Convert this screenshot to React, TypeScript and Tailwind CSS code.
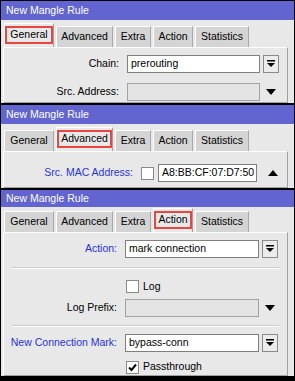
import type { ReactNode } from 'react';

const tabs = [
  { name: 'General', w: 'w-[50px]' },
  { name: 'Advanced', w: 'w-[57px]' },
  { name: 'Extra', w: 'w-[36px]' },
  { name: 'Action', w: 'w-[40px]' },
  { name: 'Statistics', w: 'w-[54px]' },
];

function TitleBar() {
  return (
    <div className="h-[19px] bg-[#6265d0] text-white text-[10.5px] pl-[5px] flex items-center leading-none">
      New Mangle Rule
    </div>
  );
}

function Tabs({ active }: { active: string }) {
  return (
    <div className="h-[27px] flex items-end gap-[2px] pl-[3px]">
      {tabs.map((t) =>
        t.name === active ? (
          <div key={t.name} className={`${t.w} h-[24px] bg-[#e8e8e8] border-t border-l border-white border-r border-r-[#a0a0a0] flex flex-col pt-[2px]`}>
            <div className="h-[18px] border-2 border-[#e8473f] flex items-center justify-center">{t.name}</div>
          </div>
        ) : (
          <div key={t.name} className={`${t.w} h-[21px] bg-[#d4d4d4] border-t border-l border-white border-r border-r-[#a8a8a8] flex items-center justify-center`}>
            {t.name}
          </div>
        )
      )}
    </div>
  );
}

function DropButton() {
  return (
    <div className="w-[16px] h-[18px] border border-[#8a8a8a] bg-[#ececec] flex items-center justify-center">
      <svg width="8" height="8" viewBox="0 0 8 8">
        <rect x="0" y="0" width="8" height="1.5" fill="#000" />
        <path d="M0 3 L8 3 L4 7 Z" fill="#000" />
      </svg>
    </div>
  );
}

function Arrow({ up }: { up?: boolean }) {
  return (
    <div className="w-[16px] h-[18px] flex items-center justify-center">
      <svg width="10" height="6" viewBox="0 0 10 6">
        <path d={up ? 'M0 6 L10 6 L5 0 Z' : 'M0 0 L10 0 L5 6 Z'} fill="#000" />
      </svg>
    </div>
  );
}

function Input({ value, disabled, w = 'w-[133px]' }: { value?: string; disabled?: boolean; w?: string }) {
  return (
    <div className={`${w} h-[18px] border ${disabled ? 'bg-[#e4e4e4] border-[#a2a2a2]' : 'bg-white border-[#7f7f7f]'} pl-[3px] flex items-center`}>
      {value}
    </div>
  );
}

function Check({ checked }: { checked?: boolean }) {
  return (
    <div className="w-[13px] h-[13px] border border-[#8a8a8a] bg-white flex items-center justify-center">
      {checked && (
        <svg width="9" height="9" viewBox="0 0 9 9">
          <path d="M1 4.5 L3.5 7 L8 1.5" stroke="#000" strokeWidth="2" fill="none" />
        </svg>
      )}
    </div>
  );
}

function Row({ label, blue, lw, children }: { label: string; blue?: boolean; lw: string; children: ReactNode }) {
  return (
    <div className="flex items-center gap-[8px]">
      <div className={`${lw} text-right whitespace-nowrap ${blue ? 'text-[#1f33e6]' : 'text-black'}`}>{label}</div>
      {children}
    </div>
  );
}

function Sep() {
  return <div className="mx-[8px] h-[2px] border-t border-[#cdcdcd] border-b border-b-white" />;
}

function Panel({ active, h, children }: { active: string; h: string; children: ReactNode }) {
  return (
    <div className={`${h} bg-[#e8e8e8] overflow-hidden flex flex-col`}>
      <TitleBar />
      <Tabs active={active} />
      <div className="ml-[2px] w-[285px] flex-1 border-t border-l border-white border-r border-r-[#a0a0a0] border-b border-b-[#a0a0a0]">
        {children}
      </div>
    </div>
  );
}

export default function App() {
  return (
    <div className="w-[295px] h-[381px] bg-black p-[1px] pb-[2px] flex flex-col gap-[2px] text-[10.5px] text-black font-['Liberation_Sans',Arial,sans-serif]">
      <Panel active="General" h="h-[102px]">
        <div className="pt-[7px] flex flex-col gap-[10px]">
          <Row label="Chain:" lw="w-[115px]">
            <div className="flex items-center gap-[3px]">
              <Input value="prerouting" w="w-[133px]" />
              <DropButton />
            </div>
          </Row>
          <Row label="Src. Address:" lw="w-[115px]">
            <div className="flex items-center gap-[3px]">
              <Input disabled w="w-[133px]" />
              <Arrow />
            </div>
          </Row>
        </div>
      </Panel>
      <Panel active="Advanced" h="h-[83px]">
        <div className="pt-[12px]">
          <Row label="Src. MAC Address:" blue lw="w-[129px]">
            <div className="flex items-center gap-[4px]">
              <Check />
              <Input value="A8:BB:CF:07:D7:50" w="w-[99px]" />
              <div className="ml-[4px]">
                <Arrow up />
              </div>
            </div>
          </Row>
        </div>
      </Panel>
      <Panel active="Action" h="h-[186px]">
        <div className="pt-[7px] flex flex-col">
          <Row label="Action:" blue lw="w-[113px]">
            <div className="flex items-center gap-[3px]">
              <Input value="mark connection" w="w-[134px]" />
              <DropButton />
            </div>
          </Row>
          <div className="mt-[9px]">
            <Sep />
          </div>
          <div className="mt-[10px] pl-[122px] flex items-center gap-[4px]">
            <Check />
            <span>Log</span>
          </div>
          <div className="mt-[5px]">
            <Row label="Log Prefix:" lw="w-[113px]">
              <div className="flex items-center gap-[3px]">
                <Input disabled w="w-[134px]" />
                <Arrow />
              </div>
            </Row>
          </div>
          <div className="mt-[8px]">
            <Sep />
          </div>
          <div className="mt-[7px]">
            <Row label="New Connection Mark:" blue lw="w-[113px]">
              <div className="flex items-center gap-[3px]">
                <Input value="bypass-conn" w="w-[134px]" />
                <DropButton />
              </div>
            </Row>
          </div>
          <div className="mt-[7px] pl-[122px] flex items-center gap-[4px]">
            <Check checked />
            <span>Passthrough</span>
          </div>
        </div>
      </Panel>
    </div>
  );
}
